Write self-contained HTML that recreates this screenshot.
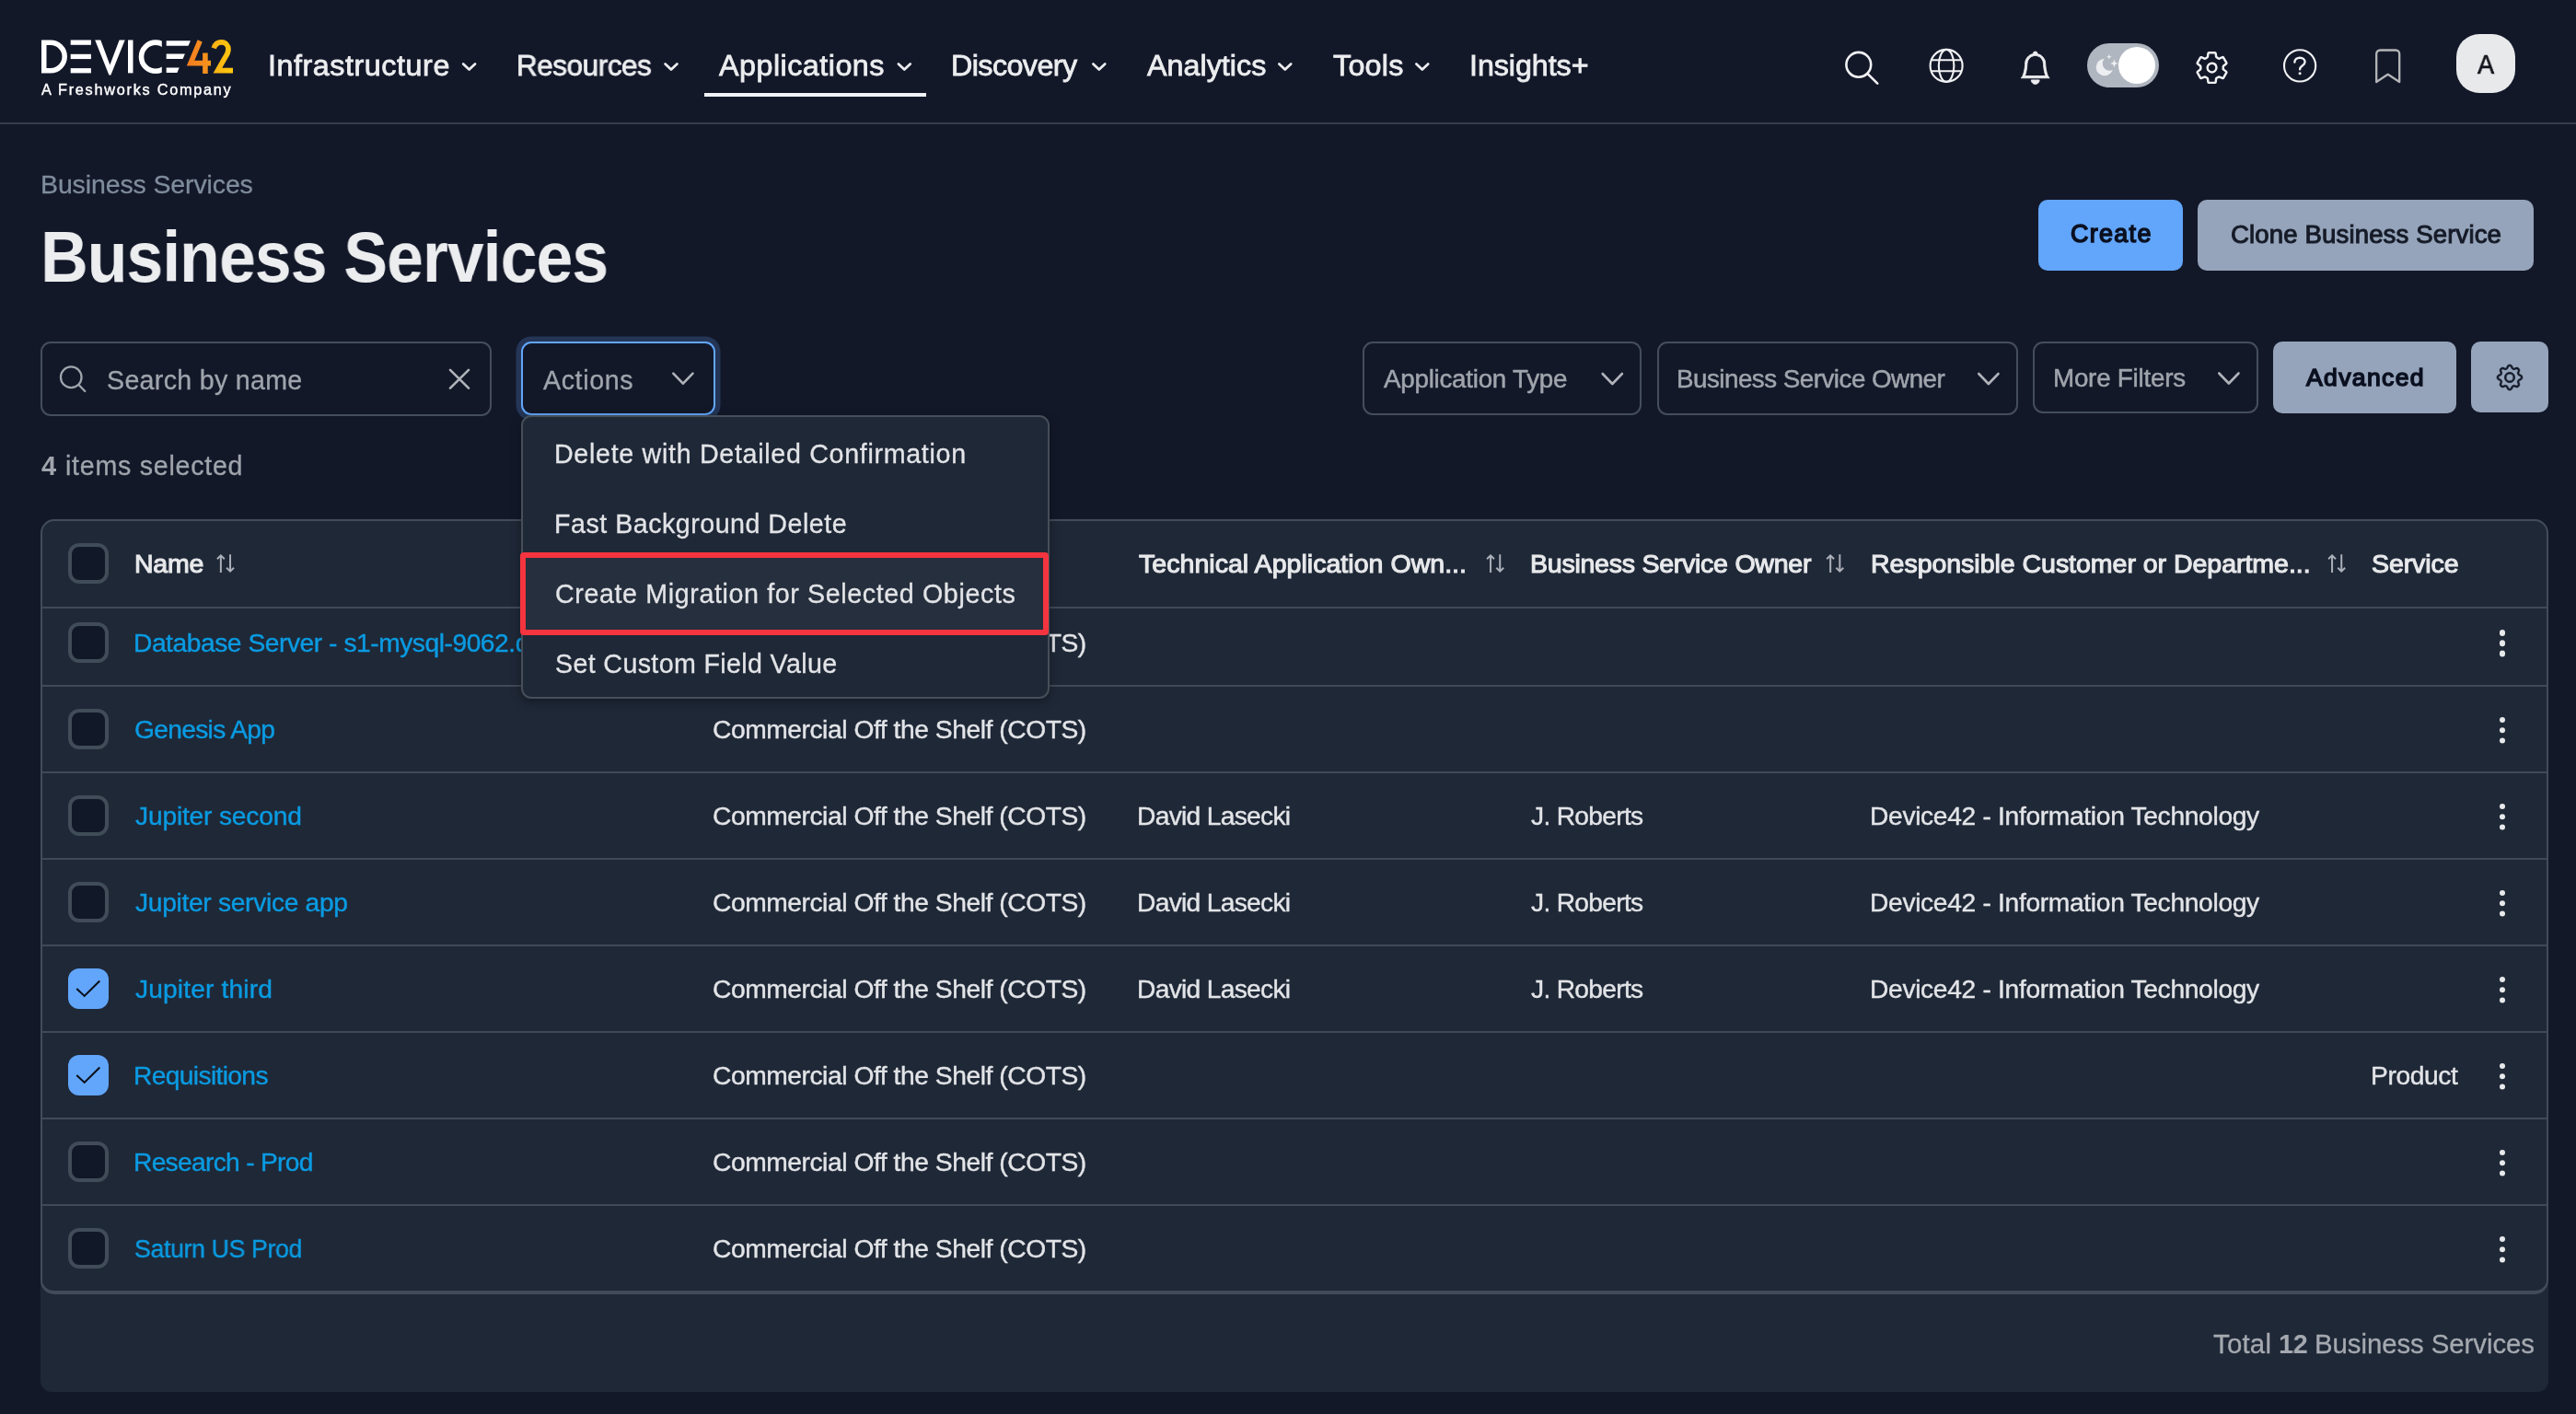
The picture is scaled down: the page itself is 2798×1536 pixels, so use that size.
<!DOCTYPE html>
<html lang="en">
<head>
<meta charset="utf-8">
<title>Business Services - Device42</title>
<style>
*{box-sizing:border-box;margin:0;padding:0}
html,body{width:2798px;height:1536px;overflow:hidden;background:#131829}
body{position:relative;font-family:"Liberation Sans",sans-serif;color:#e2e4e7}
.t{position:absolute;white-space:nowrap;font-family:"Liberation Sans",sans-serif;will-change:transform}
.abs{position:absolute}
svg{position:absolute;overflow:visible}
.box{position:absolute;border:2px solid #444e5b;border-radius:11px;background:#131829}
.btn{position:absolute;border-radius:10px}
.cb{position:absolute;left:74px;width:44px;height:44px;border:4px solid #414c59;border-radius:12px;background:#111828}
.cb.on{border:0;background:#62a6fb}
.hl{position:absolute;left:46px;width:2720px;height:2px;background:#404a57}
.kebab{position:absolute;left:2714.850px;width:6.300px;height:6.300px;margin-top:-0.450px;border-radius:50%;background:#e8e9eb;box-shadow:0 11.2px 0 #e8e9eb,0 22.4px 0 #e8e9eb}
</style>
</head>
<body>
<!-- ===== NAV ===== -->
<header class="abs" style="left:0;top:0;width:2798px;height:135px;border-bottom:2px solid #363c4b"></header>
<!-- logo -->
<svg style="left:0;top:-1px" width="300" height="130" viewBox="0 0 300 130">
  <defs><clipPath id="cc"><rect x="140" y="40" width="35.8" height="50"/></clipPath>
    <linearGradient id="g4" x1="202" y1="0" x2="254" y2="0" gradientUnits="userSpaceOnUse">
      <stop offset="0" stop-color="#f47b20"/><stop offset="0.5" stop-color="#f7941d"/><stop offset="0.55" stop-color="#fbb116"/><stop offset="1" stop-color="#ffc90b"/>
    </linearGradient>
  </defs>
  <g fill="#fff">
    <path d="M47.75 47.25H55a15.2 15.2 0 0 1 0 30.4H47.75Z" fill="none" stroke="#fff" stroke-width="5.5"/>
    <rect x="76.7" y="44.5" width="22.2" height="5.3"/><rect x="76.7" y="59.8" width="22.2" height="5.3"/><rect x="76.7" y="75.1" width="22.2" height="5.3"/>
    <polygon points="103.2,44.5 109.3,44.5 119.4,71.5 129.6,44.5 135.7,44.5 120.4,82.6 118.4,82.6"/>
    <rect x="139" y="44.5" width="5.5" height="35.9"/>
    <circle cx="169.1" cy="62.7" r="15.6" fill="none" stroke="#fff" stroke-width="5.6" clip-path="url(#cc)"/>
    <polygon points="180.7,45.2 206.9,45.2 204.6,50.7 180.7,50.7"/>
    <polygon points="180.7,59.5 200.9,59.5 198.6,65 180.7,65"/>
    <polygon points="180.7,74.6 194.7,74.6 192.4,80.1 180.7,80.1"/>
  </g>
  <g fill="none" stroke="url(#g4)" stroke-width="5.6">
    <path d="M217.2 45.4L207 69.6H229" stroke-linejoin="miter"/>
    <path d="M222.9 58.5V81"/>
    <path d="M232.2 53.4C233.6 49.2 236.8 46.9 240.4 46.9C245 46.9 248 50.3 248 54.6C248 58 246.6 60.6 244.4 63.6L236.4 77.6H253"/>
  </g>
</svg>
<!-- nav chevrons -->
<svg style="left:0;top:0" width="2798" height="135" fill="none" stroke="#ecedef" stroke-width="2.7" stroke-linecap="round" stroke-linejoin="round">
  <polyline points="503.2,69.5 509.6,75.6 516,69.5"/>
  <polyline points="722.6,69.5 729,75.6 735.4,69.5"/>
  <polyline points="975.9,69.5 982.3,75.6 988.7,69.5"/>
  <polyline points="1187.4,69.5 1193.8,75.6 1200.2,69.5"/>
  <polyline points="1389.4,69.5 1395.8,75.6 1402.2,69.5"/>
  <polyline points="1538.4,69.5 1544.8,75.6 1551.2,69.5"/>
</svg>
<div class="abs" style="left:765px;top:101px;width:240.6px;height:4px;background:#f1f2f4"></div>
<!-- right icons -->
<svg style="left:2000px;top:50px" width="48" height="48" viewBox="0 0 48 48" fill="none" stroke="#f1f2f4" stroke-width="2.6" stroke-linecap="round">
  <circle cx="18.8" cy="20.3" r="13.4"/><path d="M28.6 30.1L39.2 40.700"/>
</svg>
<svg style="left:2094px;top:51px" width="40" height="40" viewBox="0 0 40 40" fill="none" stroke="#f1f2f4" stroke-width="2.1">
  <circle cx="20.1" cy="20.4" r="17.5"/><ellipse cx="20.1" cy="20.4" rx="8.3" ry="17.5"/><path d="M3.7 14.3H36.5M3.7 26.2H36.5"/>
</svg>
<svg style="left:2192.5px;top:55.9px" width="35.4" height="35.4" viewBox="0 0 16 16" fill="#ecedef" stroke="#ecedef" stroke-width="0.42" stroke-linejoin="round"><path d="M8 16a2 2 0 0 0 2-2H6a2 2 0 0 0 2 2zM8 1.918l-.797.161A4.002 4.002 0 0 0 4 6c0 .628-.134 2.197-.459 3.742-.16.767-.376 1.566-.663 2.258h10.244c-.287-.692-.502-1.490-.663-2.258C12.134 8.197 12 6.628 12 6a4.002 4.002 0 0 0-3.203-3.920L8 1.917zM14.220 12c.223.447.481.801.780 1H1c.299-.199.557-.553.780-1C2.680 10.200 3 6.880 3 6c0-2.420 1.720-4.440 4.005-4.901a1 1 0 1 1 1.990 0A5.002 5.002 0 0 1 13 6c0 .880.320 4.200 1.220 6z"/></svg>
<!-- toggle -->
<div class="abs" style="left:2267px;top:47px;width:78.2px;height:48.2px;border-radius:24.1px;background:#b0b6c0"></div>
<div class="abs" style="left:2301.1px;top:51px;width:40.2px;height:40.2px;border-radius:50%;background:#fff"></div>
<svg style="left:2276px;top:58px" width="26" height="26" viewBox="0 0 26 26" fill="#eceef1">
  <circle cx="9.94" cy="15.05" r="9.25"/><circle cx="15.5" cy="11" r="7.800" fill="#b0b6c0"/>
  <path d="M14.800 0.800L15.600 2.900L17.700 3.700L15.600 4.500L14.800 6.600L14 4.500L11.900 3.700L14 2.900Z"/>
  <path d="M20.400 6.600L21.600 9.700L24.700 10.900L21.600 12.100L20.400 15.200L19.200 12.100L16.100 10.900L19.200 9.700Z"/>
</svg>
<!-- gear (nav) -->
<svg style="left:2382.850px;top:54.100px" width="39.100" height="39.100" viewBox="0 0 512 512" fill="none" stroke="#f1f2f4" stroke-width="32" stroke-linecap="round" stroke-linejoin="round">
<path d="M262.29 192.310a64 64 0 1 0 57.400 57.400 64.130 64.130 0 0 0-57.400-57.400zM416.390 256a154.340 154.340 0 0 1-1.530 20.790l45.210 35.460a10.810 10.810 0 0 1 2.450 13.750l-42.770 74a10.810 10.810 0 0 1-13.140 4.590l-44.900-18.080a16.110 16.110 0 0 0-15.170 1.750A164.480 164.480 0 0 1 325 400.800a15.940 15.940 0 0 0-8.820 12.140l-6.730 47.890a11.080 11.080 0 0 1-10.680 9.170h-85.540a11.110 11.110 0 0 1-10.690-8.870l-6.720-47.820a16.070 16.070 0 0 0-9-12.220 155.300 155.300 0 0 1-21.460-12.570 16 16 0 0 0-15.110-1.710l-44.890 18.070a10.810 10.810 0 0 1-13.140-4.580l-42.770-74a10.800 10.800 0 0 1 2.450-13.750l38.210-30a16.050 16.050 0 0 0 6-14.080c-.36-4.170-.58-8.330-.58-12.500s.21-8.270.58-12.350a16 16 0 0 0-6.070-13.940l-38.190-30A10.810 10.810 0 0 1 49.480 186l42.770-74a10.810 10.810 0 0 1 13.140-4.590l44.900 18.080a16.110 16.110 0 0 0 15.170-1.750A164.480 164.480 0 0 1 187 111.200a15.940 15.940 0 0 0 8.820-12.140l6.730-47.890A11.080 11.080 0 0 1 213.230 42h85.540a11.110 11.110 0 0 1 10.690 8.870l6.720 47.820a16.070 16.070 0 0 0 9 12.220 155.300 155.300 0 0 1 21.460 12.570 16 16 0 0 0 15.110 1.710l44.890-18.070a10.810 10.810 0 0 1 13.140 4.580l42.770 74a10.800 10.800 0 0 1-2.450 13.750l-38.210 30a16.050 16.050 0 0 0-6.050 14.080c.33 4.140.55 8.300.55 12.470z"/>
</svg>
<!-- help -->
<svg style="left:2478px;top:51px" width="40" height="40" viewBox="0 0 40 40" fill="none" stroke="#f1f2f4" stroke-width="2.1" stroke-linecap="round" stroke-linejoin="round">
  <circle cx="20.1" cy="20.400" r="17.100"/>
  <path d="M14.400 16.600C14.400 13.400 17 11.700 20 11.700C23 11.700 25.600 13.500 25.600 16.300C25.600 20.300 20.100 20.100 20.100 24.300" stroke-width="2.400"/>
  <circle cx="20.1" cy="28.700" r="1.500" fill="#f1f2f4" stroke="none"/>
</svg>
<!-- bookmark -->
<svg style="left:2578px;top:51px" width="32" height="40" viewBox="0 0 32 40" fill="none" stroke="#b4b5b7" stroke-width="2.3" stroke-linejoin="round">
  <path d="M3.200 38V7.500a4 4 0 0 1 4-4h17a4 4 0 0 1 4 4V38L15.700 29.800Z"/>
</svg>
<!-- avatar -->
<div class="abs" style="left:2668.2px;top:36.6px;width:63.8px;height:64.6px;border-radius:25px;background:#e8e9eb"></div>

<!-- ===== header buttons ===== -->
<div class="btn" style="left:2214px;top:217px;width:157px;height:77.400px;background:#62a6fb"></div>
<div class="btn" style="left:2386.700px;top:217px;width:365.300px;height:77.400px;background:#95a4ba"></div>

<!-- ===== toolbar ===== -->
<div class="box" style="left:43.750px;top:371px;width:490.250px;height:81px"></div>
<svg style="left:60px;top:392px" width="40" height="40" viewBox="0 0 40 40" fill="none" stroke="#a0a4ac" stroke-width="2.3" stroke-linecap="round">
  <circle cx="17.25" cy="17.75" r="11.3"/><path d="M25.5 26L32.3 33"/>
</svg>

<div class="box" style="left:566px;top:371px;width:211px;height:80px;border-color:#62a6fb;box-shadow:0 0 0 5.5px #243556"></div>
<div class="box" style="left:1480px;top:371.250px;width:303px;height:79.250px"></div>
<div class="box" style="left:1799.500px;top:371.250px;width:392.100px;height:79.250px"></div>
<div class="box" style="left:2208.400px;top:371.250px;width:244.400px;height:77.300px"></div>
<svg style="left:0;top:0" width="2798" height="470" fill="none" stroke="#b0b3b9" stroke-width="2.6" stroke-linecap="round" stroke-linejoin="round">
  <path d="M489 401.800L509 421.700M509 401.800L489 421.700"/>
  <polyline points="731.3,405.7 741.9,416.700 752.500,405.700"/>
  <polyline points="1740.700,406 1751.300,417 1761.900,406"/>
  <polyline points="2149.300,406 2159.900,417 2170.500,406"/>
  <polyline points="2410.300,405.500 2420.900,416.500 2431.500,405.500"/>
</svg>
<div class="btn" style="left:2468.900px;top:370.800px;width:199.300px;height:78.200px;background:#95a4ba"></div>
<div class="btn" style="left:2683.900px;top:370.800px;width:84.400px;height:77.400px;background:#95a4ba"></div>
<svg style="left:2712px;top:396px" width="28" height="28" viewBox="0 0 16 16" fill="#141a29" stroke="#141a29" stroke-width="0.38"><path d="M8 4.754a3.246 3.246 0 1 0 0 6.492 3.246 3.246 0 0 0 0-6.492zM5.754 8a2.246 2.246 0 1 1 4.492 0 2.246 2.246 0 0 1-4.492 0z"/><path d="M9.796 1.343c-.527-1.790-3.065-1.790-3.592 0l-.094.319a.873.873 0 0 1-1.255.520l-.292-.160c-1.640-.892-3.433.902-2.540 2.541l.159.292a.873.873 0 0 1-.520 1.255l-.319.094c-1.790.527-1.790 3.065 0 3.592l.319.094a.873.873 0 0 1 .520 1.255l-.160.292c-.892 1.640.901 3.434 2.541 2.540l.292-.159a.873.873 0 0 1 1.255.520l.094.319c.527 1.790 3.065 1.790 3.592 0l.094-.319a.873.873 0 0 1 1.255-.520l.292.160c1.640.893 3.434-.902 2.540-2.541l-.159-.292a.873.873 0 0 1 .520-1.255l.319-.094c1.790-.527 1.790-3.065 0-3.592l-.319-.094a.873.873 0 0 1-.520-1.255l.160-.292c.893-1.640-.902-3.433-2.541-2.540l-.292.159a.873.873 0 0 1-1.255-.520l-.094-.319zm-2.633.283c.246-.835 1.428-.835 1.674 0l.094.319a1.873 1.873 0 0 0 2.693 1.115l.291-.160c.764-.415 1.600.420 1.184 1.185l-.159.292a1.873 1.873 0 0 0 1.116 2.692l.318.094c.835.246.835 1.428 0 1.674l-.319.094a1.873 1.873 0 0 0-1.115 2.693l.160.291c.415.764-.420 1.600-1.185 1.184l-.291-.159a1.873 1.873 0 0 0-2.693 1.116l-.094.318c-.246.835-1.428.835-1.674 0l-.094-.319a1.873 1.873 0 0 0-2.692-1.115l-.292.160c-.764.415-1.600-.420-1.184-1.185l.159-.291A1.873 1.873 0 0 0 1.945 8.930l-.319-.094c-.835-.246-.835-1.428 0-1.674l.319-.094A1.873 1.873 0 0 0 3.060 4.377l-.160-.292c-.415-.764.420-1.600 1.185-1.184l.292.159a1.873 1.873 0 0 0 2.692-1.115l.094-.319z"/></svg>

<!-- ===== table card ===== -->
<div class="abs" style="left:44px;top:564px;width:2723.500px;height:947.700px;border-radius:15px 15px 12px 12px;background:#1f2837"></div>
<div class="abs" style="left:44px;top:564px;width:2723.500px;height:842px;border:2px solid #424c59;border-bottom-width:4px;border-radius:15px"></div>
<div class="hl" style="top:659px"></div>
<div class="hl" style="top:744px"></div>
<div class="hl" style="top:838px"></div>
<div class="hl" style="top:932px"></div>
<div class="hl" style="top:1026px"></div>
<div class="hl" style="top:1120px"></div>
<div class="hl" style="top:1214px"></div>
<div class="hl" style="top:1308px"></div>
<!-- checkboxes -->
<div class="cb" style="top:590.250px"></div>
<div class="cb" style="top:676px"></div>
<div class="cb" style="top:770px"></div>
<div class="cb" style="top:864px"></div>
<div class="cb" style="top:958px"></div>
<div class="cb on" style="top:1052px"></div>
<div class="cb on" style="top:1146px"></div>
<div class="cb" style="top:1240px"></div>
<div class="cb" style="top:1334px"></div>
<svg style="left:74px;top:1052px" width="44" height="140" fill="none" stroke="#0a0e18" stroke-width="2.100">
  <polyline points="9.300,22 17.700,29.900 34.300,13.400"/>
  <polyline points="9.300,116 17.700,123.900 34.300,107.400"/>
</svg>
<!-- sort icons -->
<svg style="left:0;top:590px" width="2798" height="50" fill="none" stroke="#abb0b9" stroke-width="2" >
  <g id="srt"><path d="M239.860 32V13.600M235.900 17.200L239.860 13.300L243.800 17.200M250.040 12.200V30.400M246.100 26.800L250.040 30.700L254 26.800"/></g>
  <use href="#srt" x="1379.200"/>
  <use href="#srt" x="1748.300"/>
  <use href="#srt" x="2293.200"/>
</svg>
<!-- kebabs -->
<div class="kebab" style="top:684.8px"></div>
<div class="kebab" style="top:779.1px"></div>
<div class="kebab" style="top:873.1px"></div>
<div class="kebab" style="top:967.1px"></div>
<div class="kebab" style="top:1061.1px"></div>
<div class="kebab" style="top:1155.1px"></div>
<div class="kebab" style="top:1249.1px"></div>
<div class="kebab" style="top:1343.1px"></div>

<div class="t" style="left:291.00px;top:54.69px;font-size:32.27px;line-height:32.27px;letter-spacing:0.558px;font-weight:400;color:#ecedef;-webkit-text-stroke:0.80px;">Infrastructure</div>
<div class="t" style="left:561.44px;top:54.69px;font-size:32.27px;line-height:32.27px;letter-spacing:-0.436px;font-weight:400;color:#ecedef;transform:scaleX(0.9741);transform-origin:0 0;-webkit-text-stroke:0.80px;">Resources</div>
<div class="t" style="left:781.40px;top:54.69px;font-size:32.27px;line-height:32.27px;letter-spacing:0.494px;font-weight:400;color:#ecedef;-webkit-text-stroke:0.80px;">Applications</div>
<div class="t" style="left:1033.40px;top:54.69px;font-size:32.27px;line-height:32.27px;letter-spacing:-0.568px;font-weight:400;color:#ecedef;-webkit-text-stroke:0.80px;">Discovery</div>
<div class="t" style="left:1245.90px;top:54.69px;font-size:32.27px;line-height:32.27px;letter-spacing:0.022px;font-weight:400;color:#ecedef;-webkit-text-stroke:0.80px;">Analytics</div>
<div class="t" style="left:1447.80px;top:54.69px;font-size:32.27px;line-height:32.27px;letter-spacing:0.260px;font-weight:400;color:#ecedef;-webkit-text-stroke:0.80px;">Tools</div>
<div class="t" style="left:1596.00px;top:54.69px;font-size:32.27px;line-height:32.27px;letter-spacing:-0.068px;font-weight:400;color:#ecedef;-webkit-text-stroke:0.80px;">Insights+</div>
<div class="t" style="left:45.20px;top:89.22px;font-size:16.28px;line-height:16.28px;letter-spacing:1.741px;font-weight:400;color:#ffffff;-webkit-text-stroke:0.4px #fff;">A Freshworks Company</div>
<div class="t" style="left:2690.65px;top:54.76px;font-size:30.23px;line-height:30.23px;letter-spacing:0.000px;font-weight:400;color:#12151c;transform:scaleX(0.9);transform-origin:0 0;-webkit-text-stroke:0.70px;">A</div>
<div class="t" style="left:43.75px;top:186.33px;font-size:28.49px;line-height:28.49px;letter-spacing:-0.116px;font-weight:400;color:#7f8c9b;-webkit-text-stroke:0.30px;">Business Services</div>
<div class="t" style="left:43.51px;top:240.95px;font-size:77.91px;line-height:77.91px;letter-spacing:-1.052px;font-weight:700;color:#ecedef;transform:scaleX(0.9185);transform-origin:0 0;">Business Services</div>
<div class="t" style="left:2249.05px;top:240.99px;font-size:26.89px;line-height:26.89px;letter-spacing:1.336px;font-weight:400;color:#0b1020;-webkit-text-stroke:1.50px;">Create</div>
<div class="t" style="left:2422.50px;top:240.62px;font-size:27.62px;line-height:27.62px;letter-spacing:0.114px;font-weight:400;color:#161b28;-webkit-text-stroke:1.00px;">Clone Business Service</div>
<div class="t" style="left:116.40px;top:398.51px;font-size:28.63px;line-height:28.63px;letter-spacing:0.295px;font-weight:400;color:#a0a4ac;-webkit-text-stroke:0.30px;">Search by name</div>
<div class="t" style="left:589.55px;top:398.51px;font-size:28.63px;line-height:28.63px;letter-spacing:0.607px;font-weight:400;color:#a0a4ac;-webkit-text-stroke:0.30px;">Actions</div>
<div class="t" style="left:1503.25px;top:398.00px;font-size:27.76px;line-height:27.76px;letter-spacing:-0.246px;font-weight:400;color:#a0a4ac;-webkit-text-stroke:0.50px;">Application Type</div>
<div class="t" style="left:1820.75px;top:398.00px;font-size:27.76px;line-height:27.76px;letter-spacing:-0.502px;font-weight:400;color:#a0a4ac;-webkit-text-stroke:0.50px;">Business Service Owner</div>
<div class="t" style="left:2230.25px;top:397.45px;font-size:27.76px;line-height:27.76px;letter-spacing:-0.218px;font-weight:400;color:#a0a4ac;-webkit-text-stroke:0.50px;">More Filters</div>
<div class="t" style="left:2504.95px;top:396.83px;font-size:26.60px;line-height:26.60px;letter-spacing:1.338px;font-weight:400;color:#0b1020;-webkit-text-stroke:1.50px;">Advanced</div>
<div class="t" style="left:44.75px;top:491.69px;font-size:29.07px;line-height:29.07px;letter-spacing:0.000px;font-weight:700;color:#a0a4ac;">4</div>
<div class="t" style="left:70.75px;top:491.91px;font-size:28.63px;line-height:28.63px;letter-spacing:0.735px;font-weight:400;color:#a0a4ac;-webkit-text-stroke:0.30px;">items selected</div>
<div class="t" style="left:145.80px;top:597.57px;font-size:28.56px;line-height:28.56px;letter-spacing:-0.291px;font-weight:400;color:#e8e9eb;-webkit-text-stroke:1.10px;">Name</div>
<div class="t" style="left:775.05px;top:597.57px;font-size:28.56px;line-height:28.56px;letter-spacing:1.720px;font-weight:400;color:#e8e9eb;-webkit-text-stroke:1.10px;">Application Type</div>
<div class="t" style="left:1236.80px;top:597.57px;font-size:28.56px;line-height:28.56px;letter-spacing:0.021px;font-weight:400;color:#e8e9eb;-webkit-text-stroke:1.10px;">Technical Application Own...</div>
<div class="t" style="left:1661.55px;top:597.57px;font-size:28.56px;line-height:28.56px;letter-spacing:-0.265px;font-weight:400;color:#e8e9eb;-webkit-text-stroke:1.10px;">Business Service Owner</div>
<div class="t" style="left:2031.55px;top:597.57px;font-size:28.56px;line-height:28.56px;letter-spacing:-0.046px;font-weight:400;color:#e8e9eb;-webkit-text-stroke:1.10px;">Responsible Customer or Departme...</div>
<div class="t" style="left:2576.05px;top:597.57px;font-size:28.56px;line-height:28.56px;letter-spacing:-0.110px;font-weight:400;color:#e8e9eb;-webkit-text-stroke:1.10px;">Service</div>
<div class="t" style="left:145.20px;top:683.88px;font-size:28.20px;line-height:28.20px;letter-spacing:-0.455px;font-weight:400;color:#0a9be2;-webkit-text-stroke:0.40px;">Database Server - s1-mysql-9062.device42.com</div>
<div class="t" style="left:773.70px;top:683.88px;font-size:28.20px;line-height:28.20px;letter-spacing:-0.434px;font-weight:400;color:#e2e4e7;-webkit-text-stroke:0.40px;">Commercial Off the Shelf (COTS)</div>
<div class="t" style="left:146.20px;top:778.13px;font-size:28.20px;line-height:28.20px;letter-spacing:-0.691px;font-weight:400;color:#0a9be2;-webkit-text-stroke:0.40px;">Genesis App</div>
<div class="t" style="left:773.70px;top:778.13px;font-size:28.20px;line-height:28.20px;letter-spacing:-0.434px;font-weight:400;color:#e2e4e7;-webkit-text-stroke:0.40px;">Commercial Off the Shelf (COTS)</div>
<div class="t" style="left:147.20px;top:872.13px;font-size:28.20px;line-height:28.20px;letter-spacing:-0.189px;font-weight:400;color:#0a9be2;-webkit-text-stroke:0.40px;">Jupiter second</div>
<div class="t" style="left:773.70px;top:872.13px;font-size:28.20px;line-height:28.20px;letter-spacing:-0.434px;font-weight:400;color:#e2e4e7;-webkit-text-stroke:0.40px;">Commercial Off the Shelf (COTS)</div>
<div class="t" style="left:1235.20px;top:872.13px;font-size:28.20px;line-height:28.20px;letter-spacing:-0.696px;font-weight:400;color:#e2e4e7;-webkit-text-stroke:0.40px;">David Lasecki</div>
<div class="t" style="left:1662.70px;top:872.13px;font-size:28.20px;line-height:28.20px;letter-spacing:-0.696px;font-weight:400;color:#e2e4e7;-webkit-text-stroke:0.40px;">J. Roberts</div>
<div class="t" style="left:2031.20px;top:872.13px;font-size:28.20px;line-height:28.20px;letter-spacing:-0.322px;font-weight:400;color:#e2e4e7;-webkit-text-stroke:0.40px;">Device42 - Information Technology</div>
<div class="t" style="left:147.20px;top:966.13px;font-size:28.20px;line-height:28.20px;letter-spacing:-0.311px;font-weight:400;color:#0a9be2;-webkit-text-stroke:0.40px;">Jupiter service app</div>
<div class="t" style="left:773.70px;top:966.13px;font-size:28.20px;line-height:28.20px;letter-spacing:-0.434px;font-weight:400;color:#e2e4e7;-webkit-text-stroke:0.40px;">Commercial Off the Shelf (COTS)</div>
<div class="t" style="left:1235.20px;top:966.13px;font-size:28.20px;line-height:28.20px;letter-spacing:-0.696px;font-weight:400;color:#e2e4e7;-webkit-text-stroke:0.40px;">David Lasecki</div>
<div class="t" style="left:1662.70px;top:966.13px;font-size:28.20px;line-height:28.20px;letter-spacing:-0.696px;font-weight:400;color:#e2e4e7;-webkit-text-stroke:0.40px;">J. Roberts</div>
<div class="t" style="left:2031.20px;top:966.13px;font-size:28.20px;line-height:28.20px;letter-spacing:-0.322px;font-weight:400;color:#e2e4e7;-webkit-text-stroke:0.40px;">Device42 - Information Technology</div>
<div class="t" style="left:147.20px;top:1060.13px;font-size:28.20px;line-height:28.20px;letter-spacing:0.134px;font-weight:400;color:#0a9be2;-webkit-text-stroke:0.40px;">Jupiter third</div>
<div class="t" style="left:773.70px;top:1060.13px;font-size:28.20px;line-height:28.20px;letter-spacing:-0.434px;font-weight:400;color:#e2e4e7;-webkit-text-stroke:0.40px;">Commercial Off the Shelf (COTS)</div>
<div class="t" style="left:1235.20px;top:1060.13px;font-size:28.20px;line-height:28.20px;letter-spacing:-0.696px;font-weight:400;color:#e2e4e7;-webkit-text-stroke:0.40px;">David Lasecki</div>
<div class="t" style="left:1662.70px;top:1060.13px;font-size:28.20px;line-height:28.20px;letter-spacing:-0.696px;font-weight:400;color:#e2e4e7;-webkit-text-stroke:0.40px;">J. Roberts</div>
<div class="t" style="left:2031.20px;top:1060.13px;font-size:28.20px;line-height:28.20px;letter-spacing:-0.322px;font-weight:400;color:#e2e4e7;-webkit-text-stroke:0.40px;">Device42 - Information Technology</div>
<div class="t" style="left:145.20px;top:1154.13px;font-size:28.20px;line-height:28.20px;letter-spacing:-0.641px;font-weight:400;color:#0a9be2;-webkit-text-stroke:0.40px;">Requisitions</div>
<div class="t" style="left:773.70px;top:1154.13px;font-size:28.20px;line-height:28.20px;letter-spacing:-0.434px;font-weight:400;color:#e2e4e7;-webkit-text-stroke:0.40px;">Commercial Off the Shelf (COTS)</div>
<div class="t" style="left:2575.20px;top:1154.13px;font-size:28.20px;line-height:28.20px;letter-spacing:-0.385px;font-weight:400;color:#e2e4e7;-webkit-text-stroke:0.40px;">Product</div>
<div class="t" style="left:145.20px;top:1248.13px;font-size:28.20px;line-height:28.20px;letter-spacing:-0.704px;font-weight:400;color:#0a9be2;-webkit-text-stroke:0.40px;">Research - Prod</div>
<div class="t" style="left:773.70px;top:1248.13px;font-size:28.20px;line-height:28.20px;letter-spacing:-0.434px;font-weight:400;color:#e2e4e7;-webkit-text-stroke:0.40px;">Commercial Off the Shelf (COTS)</div>
<div class="t" style="left:146.24px;top:1342.13px;font-size:28.20px;line-height:28.20px;letter-spacing:-0.381px;font-weight:400;color:#0a9be2;transform:scaleX(0.9475);transform-origin:0 0;-webkit-text-stroke:0.40px;">Saturn US Prod</div>
<div class="t" style="left:773.70px;top:1342.13px;font-size:28.20px;line-height:28.20px;letter-spacing:-0.434px;font-weight:400;color:#e2e4e7;-webkit-text-stroke:0.40px;">Commercial Off the Shelf (COTS)</div>
<div class="t" style="left:2404.15px;top:1445.00px;font-size:29.36px;line-height:29.36px;letter-spacing:0.227px;font-weight:400;color:#a5a9b0;-webkit-text-stroke:0.30px;">Total</div>
<div class="t" style="left:2474.73px;top:1444.78px;font-size:29.80px;line-height:29.80px;letter-spacing:-0.402px;font-weight:700;color:#a5a9b0;transform:scaleX(0.9660);transform-origin:0 0;">12</div>
<div class="t" style="left:2514.45px;top:1445.00px;font-size:29.36px;line-height:29.36px;letter-spacing:-0.055px;font-weight:400;color:#a5a9b0;-webkit-text-stroke:0.30px;">Business Services</div>

<!-- ===== dropdown ===== -->
<div class="abs" style="left:565.800px;top:451px;width:574px;height:308px;border:2px solid #454e59;border-radius:11px;background:#1f2837;box-shadow:0 3px 11px rgba(0,0,0,.36)"></div>
<div class="abs" style="left:565px;top:600px;width:574px;height:89.500px;border:6px solid #f4343f;border-radius:4px;background:#262f3d"></div>
<div class="t" style="left:601.65px;top:478.61px;font-size:28.63px;line-height:28.63px;letter-spacing:0.697px;font-weight:400;color:#e2e4e7;-webkit-text-stroke:0.30px;">Delete with Detailed Confirmation</div>
<div class="t" style="left:601.65px;top:554.61px;font-size:28.63px;line-height:28.63px;letter-spacing:0.501px;font-weight:400;color:#e2e4e7;-webkit-text-stroke:0.30px;">Fast Background Delete</div>
<div class="t" style="left:602.65px;top:630.61px;font-size:28.63px;line-height:28.63px;letter-spacing:0.624px;font-weight:400;color:#e2e4e7;-webkit-text-stroke:0.30px;">Create Migration for Selected Objects</div>
<div class="t" style="left:602.65px;top:706.61px;font-size:28.63px;line-height:28.63px;letter-spacing:0.359px;font-weight:400;color:#e2e4e7;-webkit-text-stroke:0.30px;">Set Custom Field Value</div>
</body>
</html>
